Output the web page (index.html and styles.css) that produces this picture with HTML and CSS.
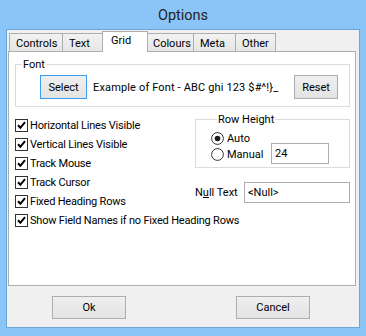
FILE: index.html
```html
<!DOCTYPE html>
<html>
<head>
<meta charset="utf-8">
<link rel="stylesheet" href="styles.css">
</head>
<body>
<div class="window">
  <div class="titlebar">Options</div>
  <div class="client">
    <div class="tabs">
      <div class="tab w-controls">Controls</div>
      <div class="tab w-text">Text</div>
      <div class="tab active w-grid">Grid</div>
      <div class="tab w-colours">Colours</div>
      <div class="tab w-meta">Meta</div>
      <div class="tab w-other">Other</div>
    </div>
    <div class="panel">
      <div class="group font-group">
        <div class="group-title">Font</div>
        <div class="font-row">
          <div class="btn btn-focus select-btn">Select</div>
          <span class="example">Example of Font - ABC ghi 123 $#^!}_</span>
          <div class="btn reset-btn">Reset</div>
        </div>
      </div>
      <div class="cols">
        <div class="checks">
          <div class="check"><svg class="box" width="13" height="13" viewBox="0 0 13 13"><rect x="0.5" y="0.5" width="12" height="12" fill="#fff" stroke="#333"/><path d="M3 6.2 L5.4 8.8 L10 3.2" fill="none" stroke="#000" stroke-width="2"/></svg><span>Horizontal Lines Visible</span></div>
          <div class="check"><svg class="box" width="13" height="13" viewBox="0 0 13 13"><rect x="0.5" y="0.5" width="12" height="12" fill="#fff" stroke="#333"/><path d="M3 6.2 L5.4 8.8 L10 3.2" fill="none" stroke="#000" stroke-width="2"/></svg><span>Vertical Lines Visible</span></div>
          <div class="check"><svg class="box" width="13" height="13" viewBox="0 0 13 13"><rect x="0.5" y="0.5" width="12" height="12" fill="#fff" stroke="#333"/><path d="M3 6.2 L5.4 8.8 L10 3.2" fill="none" stroke="#000" stroke-width="2"/></svg><span>Track Mouse</span></div>
          <div class="check"><svg class="box" width="13" height="13" viewBox="0 0 13 13"><rect x="0.5" y="0.5" width="12" height="12" fill="#fff" stroke="#333"/><path d="M3 6.2 L5.4 8.8 L10 3.2" fill="none" stroke="#000" stroke-width="2"/></svg><span>Track Cursor</span></div>
          <div class="check"><svg class="box" width="13" height="13" viewBox="0 0 13 13"><rect x="0.5" y="0.5" width="12" height="12" fill="#fff" stroke="#333"/><path d="M3 6.2 L5.4 8.8 L10 3.2" fill="none" stroke="#000" stroke-width="2"/></svg><span>Fixed Heading Rows</span></div>
          <div class="check"><svg class="box" width="13" height="13" viewBox="0 0 13 13"><rect x="0.5" y="0.5" width="12" height="12" fill="#fff" stroke="#333"/><path d="M3 6.2 L5.4 8.8 L10 3.2" fill="none" stroke="#000" stroke-width="2"/></svg><span>Show Field Names if no Fixed Heading Rows</span></div>
        </div>
        <div class="right">
          <div class="group row-group">
            <div class="group-title">Row Height</div>
            <div class="radio-row first">
              <div class="radio"><svg width="13" height="13" viewBox="0 0 13 13"><circle cx="6.5" cy="6.5" r="5.9" fill="#fff" stroke="#333"/><circle cx="6.5" cy="6.5" r="2.8" fill="#1a1a1a"/></svg><span>Auto</span></div>
            </div>
            <div class="radio-row">
              <div class="radio"><svg width="13" height="13" viewBox="0 0 13 13"><circle cx="6.5" cy="6.5" r="5.9" fill="#fff" stroke="#333"/></svg><span>Manual</span></div>
              <div class="textbox small-box">24</div>
            </div>
          </div>
          <div class="null-row">
            <span>N<u>u</u>ll Text</span>
            <div class="textbox null-box">&lt;Null&gt;</div>
          </div>
        </div>
      </div>
    </div>
    <div class="buttons">
      <div class="btn dlg">Ok</div>
      <div class="btn dlg">Cancel</div>
    </div>
  </div>
</div>
</body>
</html>
```

FILE: styles.css
```css
* { box-sizing: border-box; }
html, body { margin: 0; padding: 0; }
body {
  width: 366px;
  height: 336px;
  overflow: hidden;
  font-family: Roboto, "Liberation Sans", sans-serif;
  font-size: 11px;
  color: #000;
}
.window {
  width: 366px;
  height: 336px;
  background: #8bc5f8;
  padding: 0 6px 8px 6px;
  display: flex;
  flex-direction: column;
}
.titlebar {
  height: 29px;
  flex: none;
  display: flex;
  align-items: center;
  justify-content: center;
  font-size: 14.5px;
  color: #232323;
  padding-top: 1px;
}
.client {
  flex: 1;
  background: #f0f0f0;
  border: 1px solid #6aa5dc;
  display: flex;
  flex-direction: column;
}
.tabs {
  display: flex;
  align-items: flex-end;
  height: 20px;
  margin-top: 1px;
  padding-left: 2px;
}
.tab {
  height: 18px;
  border: 1px solid #adadad;
  border-bottom: none;
  background: linear-gradient(#f2f2f2, #e6e6e6);
  padding: 2px 0 0 6px;
  margin-left: -1px;
  white-space: nowrap;
  line-height: 15px;
}
.tab:first-child { margin-left: 0; }
.tab.active {
  height: 21px;
  background: #fff;
  margin-bottom: -1px;
  position: relative;
  z-index: 1;
  padding: 1px 0 0 8px;
}
.w-controls { width: 54px; }
.w-text { width: 41px; }
.w-grid { width: 46px; }
.w-colours { width: 47px; padding-left: 5px; }
.w-meta { width: 43px; }
.w-other { width: 41px; }
.panel {
  margin-left: 1px;
  width: 348px;
  height: 235px;
  flex: none;
  background: #fff;
  border: 1px solid #adadad;
  padding: 0 5px 0 6px;
}
.group {
  border: 1px solid #dcdcdc;
}
.group-title {
  margin: -8px 0 0 6px;
  padding: 0 1px;
  background: #fff;
  width: max-content;
  line-height: 15px;
  height: 15px;
}
.font-group {
  margin-top: 12px;
}
.font-row {
  display: flex;
  align-items: center;
  margin-top: 3px;
  padding: 0 11px 7px 24px;
}
.btn {
  height: 24px;
  border: 1px solid #adadad;
  background: linear-gradient(#efefef, #e3e3e3);
  display: flex;
  align-items: center;
  justify-content: center;
  flex: none;
}
.btn-focus { border-color: #3c9cf0; }
.select-btn { width: 47px; }
.reset-btn { width: 44px; margin-left: auto; }
.example { margin-left: 6px; white-space: nowrap; letter-spacing: 0.15px; }
.cols {
  display: flex;
  align-items: flex-start;
}
.checks {
  width: 180px;
  flex: none;
  margin-top: 9px;
}
.check {
  height: 19px;
  display: flex;
  align-items: center;
  white-space: nowrap;
  letter-spacing: -0.2px;
}
.check .box { flex: none; margin-right: 2px; }
.right {
  width: 155px;
  flex: none;
  margin-top: 12px;
}
.row-group {
  padding: 0 0 5px 15px;
}
.radio-row {
  height: 16px;
  display: flex;
  align-items: center;
}
.radio-row.first { margin-top: 3px; }
.radio {
  width: 60px;
  display: flex;
  align-items: center;
  flex: none;
}
.radio svg { flex: none; margin-right: 3px; }
.textbox {
  height: 21px;
  border: 1px solid #abadb3;
  background: #fff;
  display: flex;
  align-items: center;
  padding-left: 3px;
}
.small-box {
  width: 58px;
  margin: -3px 0 -2px 0;
}
.null-row {
  display: flex;
  align-items: center;
  margin-top: 14px;
}
.null-box {
  width: 106px;
  margin-left: auto;
}
.buttons {
  display: flex;
  margin-top: 10px;
  padding-left: 45px;
  gap: 110px;
}
.btn.dlg {
  width: 74px;
  height: 23px;
}
```
